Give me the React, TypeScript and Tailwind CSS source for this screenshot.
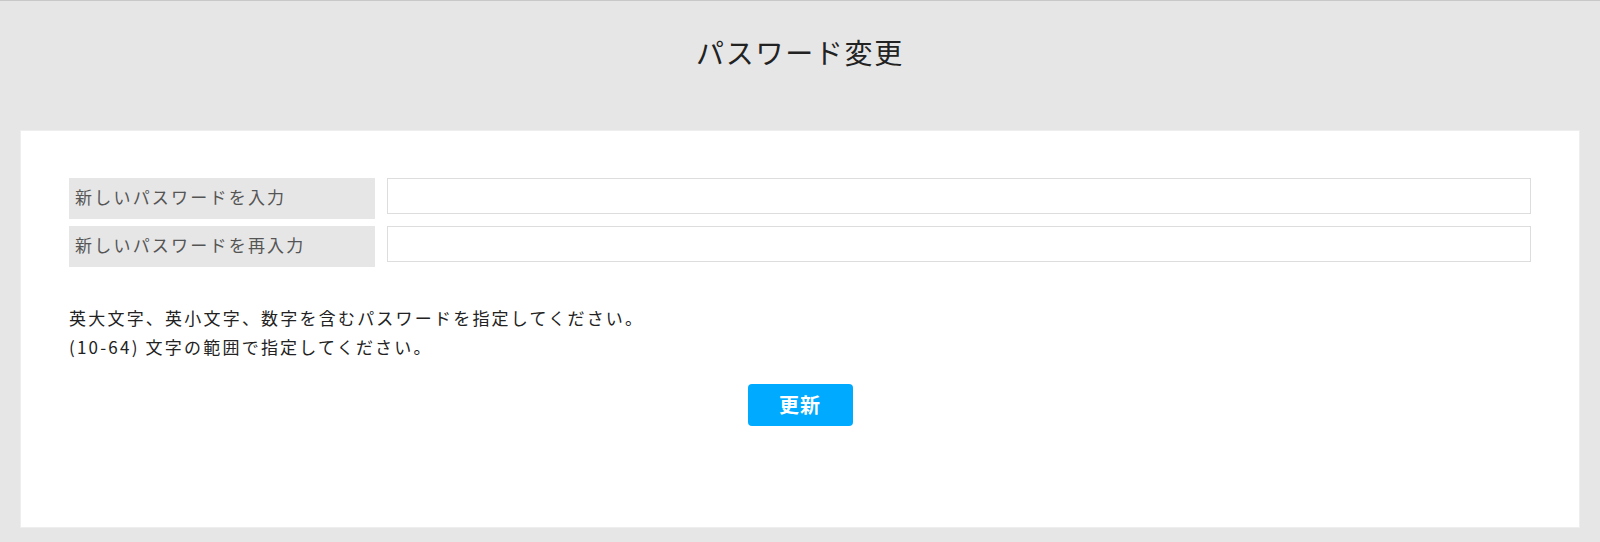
import { useState } from 'react'

export default function App() {
  const [pw, setPw] = useState('')
  const [pw2, setPw2] = useState('')

  return (
    <div
      className="min-h-[542px] bg-[#e6e6e6] border-t border-[#c8c8c8] pb-[12px]"
      style={{ fontFamily: '"Noto Sans CJK JP", "Noto Sans", sans-serif' }}
    >
      <header className="h-[129px] pt-[31px]">
        <h1 className="text-center text-[28px] leading-[40px] tracking-[0.06em] text-[#222]">パスワード変更</h1>
      </header>

      <main className="mx-[20px] bg-white border border-[#eeeeee] px-[48px] pt-[47px] pb-[101px]">
        <div className="flex flex-col gap-[7px]">
          <div className="flex items-start gap-[12px]">
            <label className="w-[306px] h-[41px] shrink-0 bg-[#e6e6e6] pl-[6px] pb-[3px] flex items-center text-[17px] tracking-[0.13em] text-[#555]">
              新しいパスワードを入力
            </label>
            <input
              type="password"
              value={pw}
              onChange={(e) => setPw(e.target.value)}
              className="flex-1 h-[36px] border border-[#dddddd] px-2 outline-none"
            />
          </div>
          <div className="flex items-start gap-[12px]">
            <label className="w-[306px] h-[41px] shrink-0 bg-[#e6e6e6] pl-[6px] pb-[3px] flex items-center text-[17px] tracking-[0.13em] text-[#555]">
              新しいパスワードを再入力
            </label>
            <input
              type="password"
              value={pw2}
              onChange={(e) => setPw2(e.target.value)}
              className="flex-1 h-[36px] border border-[#dddddd] px-2 outline-none"
            />
          </div>
        </div>

        <div className="mt-[36px] text-[17px] leading-[29px] tracking-[0.13em] text-[#222]">
          <p>英大文字、英小文字、数字を含むパスワードを指定してください。</p>
          <p>(10-64) 文字の範囲で指定してください。</p>
        </div>

        <div className="mt-[23px] flex justify-center">
          <button className="w-[105px] h-[42px] rounded-[4px] bg-[#00aaff] text-white text-[20px] font-bold tracking-[0.05em]">
            更新
          </button>
        </div>
      </main>
    </div>
  )
}
